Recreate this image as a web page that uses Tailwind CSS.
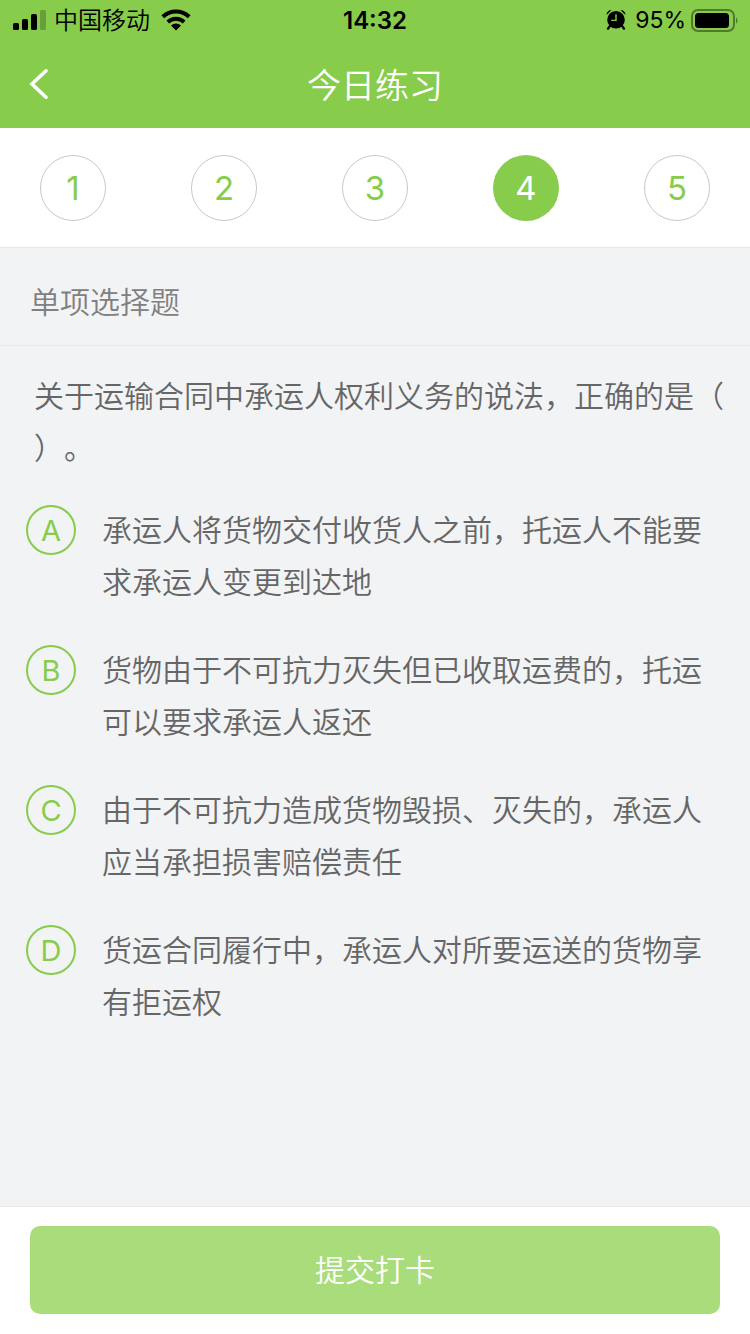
<!DOCTYPE html>
<html lang="zh-CN">
<head>
    <meta charset="UTF-8">
    <meta name="viewport" content="width=device-width, initial-scale=1.0">
    <title>今日练习</title>
    <script src="https://cdn.jsdelivr.net/npm/@tailwindcss/browser@4"></script>
</head>
<body class="min-h-screen flex flex-col bg-[#f2f3f5] text-[#666] text-[30px] font-['Inter','Noto_Sans_CJK_SC',sans-serif] font-[350] [text-spacing-trim:space-all]">
    <header class="bg-[#87cc4b]">
        <!-- status bar -->
        <div class="grid grid-cols-[1fr_auto_1fr] items-center h-10 pt-px px-3 text-black text-2xl">
            <div class="flex items-center gap-2">
                <svg viewBox="0 0 34 22" class="w-[34px] h-[22px]">
                    <rect x="1" y="13" width="6" height="7" rx="1.5" />
                    <rect x="10" y="9" width="6" height="11" rx="1.5" />
                    <rect x="19" y="4" width="6" height="16" rx="1.5" />
                    <rect x="28" y="0" width="6" height="20" rx="1.5" fill-opacity=".22" />
                </svg>
                <span>中国移动</span>
                <svg viewBox="0 0 32 24" class="w-8 h-6 ml-0.5" fill="none" stroke="#000" stroke-width="4">
                    <path d="M2.8 7.8a19 19 0 0 1 26.4 0" />
                    <path d="M7.8 13a12 12 0 0 1 16.4 0" />
                    <path d="M16 21.6l-5-5a7.2 7.2 0 0 1 10 0z" fill="#000" stroke="none" />
                </svg>
            </div>
            <time class="font-semibold">14:32</time>
            <div class="flex items-center justify-end gap-1">
                <svg viewBox="0 0 22 22" class="w-[22px] h-[22px] mr-1">
                    <circle cx="11" cy="9.8" r="8.8" />
                    <path d="M1.5 5A5 5 0 0 1 6.5 0zM20.5 5a5 5 0 0 0-5-5z" />
                    <path d="M5.2 15.6l-2.2 3M16.8 15.6l2.2 3" stroke="#000" stroke-width="2.4" stroke-linecap="round" />
                    <path d="M11 4.2V10.4H6.2" fill="none" stroke="#87cc4b" stroke-width="1.4" />
                </svg>
                <span class="text-[23px] font-normal">95%</span>
                <svg viewBox="0 0 48 24" class="w-12 h-6">
                    <rect x="2" y="1" width="42" height="21" rx="6" fill="none" stroke="#000" stroke-opacity=".4" stroke-width="2" />
                    <rect x="5" y="4" width="34" height="15" rx="3.5" />
                    <path d="M46 8.4c2 1 2 5.2 0 6.2z" fill-opacity=".4" />
                </svg>
            </div>
        </div>
        <!-- title bar -->
        <div class="grid grid-cols-[1fr_auto_1fr] items-center h-[88px] px-7 text-white">
            <button type="button" aria-label="返回" class="justify-self-start">
                <svg viewBox="0 0 22 32" class="w-[22px] h-8" fill="none" stroke="currentColor" stroke-width="3.6" stroke-linecap="round">
                    <path d="M18 2.8L4 16l14 13.2" />
                </svg>
            </button>
            <h1 class="pt-1 text-[34px] leading-none">今日练习</h1>
        </div>
    </header>

    <nav class="flex justify-between items-center h-[120px] px-10 bg-white border-b border-[#e8e8e8] text-[33px] font-normal text-[#87cc4b]">
        <button type="button" class="size-[66px] pt-0.5 rounded-full border border-[#c8c8c8]">1</button>
        <button type="button" class="size-[66px] pt-0.5 rounded-full border border-[#c8c8c8]">2</button>
        <button type="button" class="size-[66px] pt-0.5 rounded-full border border-[#c8c8c8]">3</button>
        <button type="button" aria-current="step" class="size-[66px] pt-0.5 rounded-full bg-[#87cc4b] text-white">4</button>
        <button type="button" class="size-[66px] pt-0.5 rounded-full border border-[#c8c8c8]">5</button>
    </nav>

    <main class="grow">
        <h2 class="flex items-center h-[98px] pt-3 px-[30px] border-b border-[#e9eaec] text-[#808080]">单项选择题</h2>
        <form id="answer" class="pt-6 pb-9 leading-[52px]">
            <fieldset>
                <legend class="pl-[34px] pr-5">关于运输合同中承运人权利义务的说法，正确的是（<br>）。</legend>
                <div class="flex flex-col gap-9 pt-[30px] px-[26px]">
                    <label class="flex gap-[26px]">
                        <input type="radio" name="option" value="A" class="sr-only">
                        <span class="flex shrink-0 items-center h-[52px]">
                            <span class="flex items-center justify-center size-[50px] pt-0.5 rounded-full border-2 border-[#87cc4b] text-[29px] font-normal text-[#87cc4b]">A</span>
                        </span>
                        <span>承运人将货物交付收货人之前，托运人不能要求承运人变更到达地</span>
                    </label>
                    <label class="flex gap-[26px]">
                        <input type="radio" name="option" value="B" class="sr-only">
                        <span class="flex shrink-0 items-center h-[52px]">
                            <span class="flex items-center justify-center size-[50px] pt-0.5 rounded-full border-2 border-[#87cc4b] text-[29px] font-normal text-[#87cc4b]">B</span>
                        </span>
                        <span>货物由于不可抗力灭失但已收取运费的，托运可以要求承运人返还</span>
                    </label>
                    <label class="flex gap-[26px]">
                        <input type="radio" name="option" value="C" class="sr-only">
                        <span class="flex shrink-0 items-center h-[52px]">
                            <span class="flex items-center justify-center size-[50px] pt-0.5 rounded-full border-2 border-[#87cc4b] text-[29px] font-normal text-[#87cc4b]">C</span>
                        </span>
                        <span>由于不可抗力造成货物毁损、灭失的，承运人应当承担损害赔偿责任</span>
                    </label>
                    <label class="flex gap-[26px]">
                        <input type="radio" name="option" value="D" class="sr-only">
                        <span class="flex shrink-0 items-center h-[52px]">
                            <span class="flex items-center justify-center size-[50px] pt-0.5 rounded-full border-2 border-[#87cc4b] text-[29px] font-normal text-[#87cc4b]">D</span>
                        </span>
                        <span>货运合同履行中，承运人对所要运送的货物享有拒运权</span>
                    </label>
                </div>
            </fieldset>
        </form>
    </main>

    <footer class="px-[30px] pt-[19px] pb-5 bg-white border-t border-[#e8e8e8]">
        <button type="submit" form="answer" class="w-full h-[88px] rounded-[10px] bg-[#a9dc7b] text-white">提交打卡</button>
    </footer>
</body>
</html>
